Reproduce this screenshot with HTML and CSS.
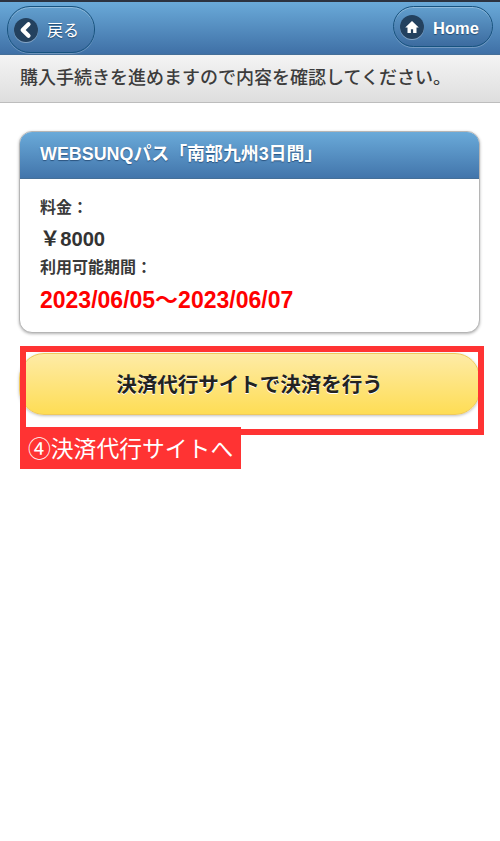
FILE: index.html
```html
<!DOCTYPE html>
<html lang="ja">
<head>
<meta charset="utf-8">
<title>決済確認</title>
<link rel="stylesheet" href="styles.css">
</head>
<body>
<header class="bar">
  <a class="btn btn-back">
    <span class="ico">
      <svg viewBox="0 0 24 24" width="20" height="20"><path d="M15 5 L8 12 L15 19" fill="none" stroke="#fff" stroke-width="5" stroke-linecap="round" stroke-linejoin="round"/></svg>
    </span>
    <span class="btn-label-ja">戻る</span>
  </a>
  <a class="btn btn-home">
    <span class="ico">
      <svg viewBox="0 0 24 24" width="18" height="18"><path d="M12 4 L3 12.5 H6 V20 H10.5 V15 H13.5 V20 H18 V12.5 H21 Z" fill="#fff"/></svg>
    </span>
    <span class="btn-label">Home</span>
  </a>
</header>
<div class="notice">購入手続きを進めますので内容を確認してください。</div>
<main class="content">
  <section class="card">
    <h2 class="card-head">WEBSUNQパス「南部九州3日間」</h2>
    <div class="card-body">
      <p class="label">料金：</p>
      <p class="price">￥8000</p>
      <p class="label label-period">利用可能期間：</p>
      <p class="period">2023/06/05～2023/06/07</p>
    </div>
  </section>
  <div class="action">
    <a class="pay">決済代行サイトで決済を行う</a>
    <div class="mark"></div>
    <div class="tag">④決済代行サイトへ</div>
  </div>
</main>
</body>
</html>
```
FILE: styles.css
```css
* { box-sizing: border-box; }
html, body { margin: 0; padding: 0; }
body {
  width: 500px;
  min-height: 841px;
  background: #fff;
  font-family: "Liberation Sans", "Noto Sans CJK JP", sans-serif;
  color: #333;
  text-spacing-trim: space-all;
}
.bar {
  height: 55px;
  border-top: 2px solid #2c3340;
  border-bottom: 1px solid #456f98;
  background: linear-gradient(#6aaad9, #3f70a6);
  display: flex;
  justify-content: space-between;
  align-items: flex-start;
  padding: 4px 7px 0 7px;
}
.btn {
  display: flex;
  align-items: center;
  color: #fff;
  text-shadow: 0 1px 1px #24496f;
  border: 1px solid #17537f;
  border-radius: 23px;
  background: linear-gradient(#629fce, #3c6b9f);
  box-shadow: inset 0 1px 0 rgba(255,255,255,.3), 0 1px 0 rgba(255,255,255,.25);
}
.btn-back { width: 88px; height: 47px; padding-left: 6px; gap: 9px; }
.btn-home { width: 100px; height: 41px; padding-left: 6px; gap: 9px; }
.ico {
  width: 24px;
  height: 24px;
  border-radius: 50%;
  background: #23415f;
  box-shadow: 0 1px 0 rgba(255,255,255,.35);
  display: flex;
  align-items: center;
  justify-content: center;
  flex: none;
}
.btn-label-ja { font-size: 16px; line-height: 20px; padding-top: 2px; }
.btn-label { font-size: 16.5px; font-weight: bold; padding-top: 3px; }
.notice {
  height: 48px;
  border-bottom: 1px solid #bdbdbd;
  background: linear-gradient(#f4f4f4, #dedede);
  font-size: 18px;
  font-weight: 500;
  color: #3c3c3c;
  line-height: 47px;
  padding-left: 20px;
  white-space: nowrap;
}
.content { padding: 28px 20px 0 19px; }
.card {
  height: 202px;
  border: 1px solid #b5b5b5;
  border-radius: 13px;
  box-shadow: 0 1px 3px rgba(0,0,0,.3);
  overflow: hidden;
  background: #fff;
}
.card-head {
  margin: 0;
  height: 47px;
  background: linear-gradient(#6aaad9, #4275ab);
  border-bottom: 1px solid #456f98;
  color: #fff;
  font-size: 17.9px;
  font-weight: bold;
  line-height: 45px;
  padding-left: 20px;
  text-shadow: 0 1px 1px #2c5580;
}
.card-body { padding: 18px 20px 0; }
.card-body p { margin: 0; }
.label { font-size: 16px; font-weight: bold; line-height: 22px; color: #3a3a3a; }
.price { font-size: 20.2px; font-weight: bold; line-height: 29px; margin-top: 6px !important; }
.label-period { margin-top: 3px !important; }
.period { font-size: 23px; font-weight: bold; color: #f00; line-height: 30px; margin-top: 6px !important; }
.action { position: relative; margin-top: 20px; }
.pay {
  display: block;
  height: 62px;
  border: 1px solid #efc95c;
  border-radius: 25px;
  background: linear-gradient(#feeba6, #fedd55);
  box-shadow: 0 1px 3px rgba(0,0,0,.25);
  color: #222;
  font-size: 20.5px;
  font-weight: bold;
  line-height: 62px;
  text-align: center;
  text-shadow: 0 1px 0 #fff;
}
.mark {
  position: absolute;
  left: 1px;
  top: -7px;
  width: 464px;
  height: 89px;
  border: 6.5px solid #ff3333;
}
.tag {
  position: absolute;
  left: 1px;
  top: 74px;
  width: 221px;
  height: 42px;
  background: #ff3333;
  color: #fff;
  font-size: 22.8px;
  line-height: 44px;
  padding-left: 8px;
  white-space: nowrap;
}
```
